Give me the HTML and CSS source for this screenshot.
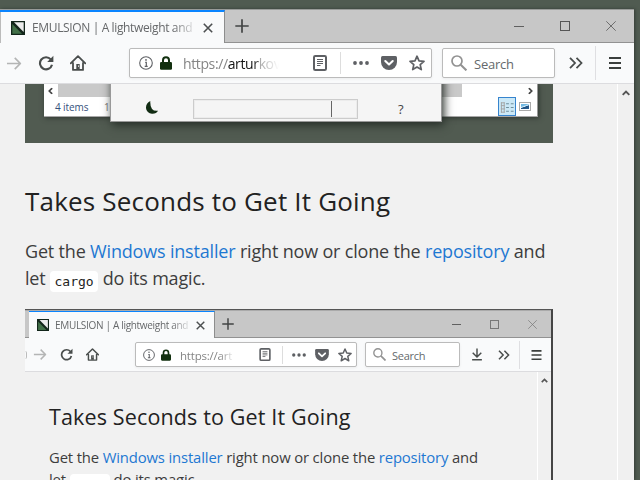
FILE: index.html
```
<!DOCTYPE html>
<html lang="en">
<head>
<meta charset="utf-8">
<title>EMULSION | A lightweight and minimalistic image viewer</title>
<link rel="stylesheet" href="styles.css">
</head>
<body>
<svg class="defs" width="0" height="0">
  <symbol id="logo" viewBox="0 0 14 14"><rect width="14" height="14" fill="#12251a"/><path d="M1.3 3 11 12.700H1.300z" fill="#427048"/><path d="M3 1.300H12.700V11z" fill="#ececec"/></symbol>
  <symbol id="cross" viewBox="0 0 10 10"><path d="M.8.8l8.400 8.400M9.200.8.8 9.200" fill="none" stroke="currentColor" stroke-width="1.600"/></symbol>
  <symbol id="thin-cross" viewBox="0 0 10 10"><path d="M.3.3l9.400 9.400M9.700.3.3 9.700" fill="none" stroke="currentColor" stroke-width=".8"/></symbol>
  <symbol id="plus" viewBox="0 0 14 14"><path d="M7 .3v13.400M.3 7h13.400" fill="none" stroke="currentColor" stroke-width="1.700"/></symbol>
  <symbol id="forward" viewBox="0 0 16 16"><path d="M.5 8h14M8.800 2l6 6-6 6" fill="none" stroke="currentColor" stroke-width="1.800" stroke-linejoin="round"/></symbol>
  <symbol id="reload" viewBox="0 0 16 16"><path d="M12.800 4.400A6.100 6.100 0 1 0 14 9.800" fill="none" stroke="currentColor" stroke-width="2.100"/><path d="M15.400.800V7H9.200z" fill="currentColor"/></symbol>
  <symbol id="home" viewBox="0 0 16 16"><path d="M.7 8.400 8 1.200l7.300 7.200M3 8v6.900h10V8" fill="none" stroke="currentColor" stroke-width="1.800" stroke-linejoin="round" stroke-linecap="round"/><path d="M6.300 9h3.400v5.500H6.300z" fill="currentColor"/><path d="M8 10.500h1v1.200H8z" fill="#fff"/></symbol>
  <symbol id="info" viewBox="0 0 14 14"><circle cx="7" cy="7" r="6.300" fill="none" stroke="currentColor" stroke-width="1.100"/><path d="M6.200 6.300H7.300v4M5.700 10.300h3" fill="none" stroke="currentColor" stroke-width="1.200"/><circle cx="7" cy="3.900" r=".9" fill="currentColor"/></symbol>
  <symbol id="lock" viewBox="0 0 12 14"><path d="M3 7V4.300a3 3 0 0 1 6 0V7" fill="none" stroke="currentColor" stroke-width="2"/><rect y="6" width="12" height="7.800" rx="1.300" fill="currentColor"/></symbol>
  <symbol id="reader" viewBox="0 0 14 16"><rect x="1" y="1" width="12" height="14" rx="1.300" fill="none" stroke="currentColor" stroke-width="2"/><path d="M4 4.500h6M4 6.500h6M4 8.500h6M4 10.500h3.500" stroke="currentColor"/></symbol>
  <symbol id="dots" viewBox="0 0 16 4"><circle cx="2" cy="2" r="1.900" fill="currentColor"/><circle cx="8" cy="2" r="1.900" fill="currentColor"/><circle cx="14" cy="2" r="1.900" fill="currentColor"/></symbol>
  <symbol id="pocket" viewBox="0 0 16 14"><path d="M1.500 0h13Q16 0 16 1.500V6A8 8 0 0 1 0 6V1.500Q0 0 1.500 0z" fill="currentColor"/><path d="M4.300 5 8 8.500 11.700 5" fill="none" stroke="#fff" stroke-width="2.100" stroke-linecap="round" stroke-linejoin="round"/></symbol>
  <symbol id="star" viewBox="0 0 16 16"><path d="M8 1.200 10 5.800l5 .5-3.800 3.300L12.300 14.600 8 12l-4.300 2.600 1.100-5L1 6.300l5-.5z" fill="none" stroke="currentColor" stroke-width="1.700" stroke-linejoin="round"/></symbol>
  <symbol id="magnifier" viewBox="0 0 16 16"><circle cx="6" cy="6" r="5" fill="none" stroke="currentColor" stroke-width="1.700"/><path d="M9.700 9.700 15.400 15.400" stroke="currentColor" stroke-width="2"/></symbol>
  <symbol id="download" viewBox="0 0 14 14"><path d="M7 0v9.500M2 5l5 5 5-5M1.300 13.100h11.400" fill="none" stroke="currentColor" stroke-width="1.700"/></symbol>
  <symbol id="more" viewBox="0 0 14 12"><path d="M1 .8 6 6l-5 5.200M7.500.8l5 5.200-5 5.200" fill="none" stroke="currentColor" stroke-width="1.800"/></symbol>
  <symbol id="menu" viewBox="0 0 12 12"><path d="M0 1h12M0 6h12M0 11h12" stroke="currentColor" stroke-width="1.900"/></symbol>
  <symbol id="up" viewBox="0 0 8 6"><path d="M.7 4.900 4 1.600l3.300 3.300" fill="none" stroke="currentColor" stroke-width="1.900"/></symbol>
  <symbol id="moon" viewBox="0 0 12 13"><path d="M4.300 0Q0 2 0 6.500A6 6 0 0 0 6.500 12.700Q10.500 12.600 12 9.800Q3.800 10.700 4.300 0z" fill="currentColor"/></symbol>
</svg>

<main class="browser">
  <header class="titlebar">
    <div class="tab">
      <svg class="favicon"><use href="#logo"/></svg>
      <span class="tab-title">EMULSION | A lightweight and</span>
      <svg class="tab-close"><use href="#cross"/></svg>
    </div>
    <svg class="new-tab"><use href="#plus"/></svg>
    <div class="controls"><i class="minimize"></i><i class="maximize"></i><svg class="close"><use href="#thin-cross"/></svg></div>
  </header>
  <nav class="toolbar">
    <svg class="forward"><use href="#forward"/></svg>
    <svg class="reload"><use href="#reload"/></svg>
    <svg class="home"><use href="#home"/></svg>
    <div class="urlbar">
      <svg class="info"><use href="#info"/></svg>
      <svg class="lock"><use href="#lock"/></svg>
      <span class="url">https://<b>artur</b>kov</span>
      <svg class="reader"><use href="#reader"/></svg>
      <i class="divider"></i>
      <svg class="dots"><use href="#dots"/></svg>
      <svg class="pocket"><use href="#pocket"/></svg>
      <svg class="star"><use href="#star"/></svg>
    </div>
    <div class="search"><svg class="magnifier"><use href="#magnifier"/></svg><span>Search</span></div>
    <svg class="more"><use href="#more"/></svg>
    <i class="separator"></i>
    <svg class="menu"><use href="#menu"/></svg>
  </nav>
  <div class="viewport">
    <article class="page">
      <figure class="desktop">
        <div class="explorer">
          <div class="hscroll"><svg class="left"><use href="#up"/></svg><span class="thumb"></span><svg class="right"><use href="#up"/></svg></div>
          <div class="status"><span class="items">4 items</span><span class="selected">1</span>
            <span class="view details"><svg width="16" height="13" viewBox="0 0 16 13"><path d="M1.500 1v11M4.500 1v11M1 1.500h4M1 4.500h4M1 8h4M1 11.500h4" stroke="#a2a2a2" fill="none"/><path d="M6.500 2.500h3M11.500 2.500h3M6.500 6.500h3M11.500 6.500h3M6.500 10.500h3M11.500 10.500h3" stroke="#698996"/></svg></span>
            <span class="view picture"></span>
          </div>
        </div>
        <div class="dialog">
          <svg class="moon"><use href="#moon"/></svg>
          <div class="slider"></div>
          <span class="help">?</span>
        </div>
      </figure>
      <h1>Takes Seconds to Get It Going</h1>
      <p>Get the <a>Windows installer</a> right now or clone the <a>repository</a> and<br>let <code>cargo</code> do its magic.</p>
      <section class="browser inner">
        <header class="titlebar">
          <div class="tab">
            <svg class="favicon"><use href="#logo"/></svg>
            <span class="tab-title">EMULSION | A lightweight and</span>
            <svg class="tab-close"><use href="#cross"/></svg>
          </div>
          <svg class="new-tab"><use href="#plus"/></svg>
          <div class="controls"><i class="minimize"></i><i class="maximize"></i><svg class="close"><use href="#thin-cross"/></svg></div>
        </header>
        <nav class="toolbar">
          <i class="back"></i>
          <svg class="forward"><use href="#forward"/></svg>
          <svg class="reload"><use href="#reload"/></svg>
          <svg class="home"><use href="#home"/></svg>
          <div class="urlbar">
            <svg class="info"><use href="#info"/></svg>
            <svg class="lock"><use href="#lock"/></svg>
            <span class="url">https://art</span>
            <svg class="reader"><use href="#reader"/></svg>
            <i class="divider"></i>
            <svg class="dots"><use href="#dots"/></svg>
            <svg class="pocket"><use href="#pocket"/></svg>
            <svg class="star"><use href="#star"/></svg>
          </div>
          <div class="search"><svg class="magnifier"><use href="#magnifier"/></svg><span>Search</span></div>
          <svg class="download"><use href="#download"/></svg>
          <svg class="more"><use href="#more"/></svg>
          <i class="separator"></i>
          <svg class="menu"><use href="#menu"/></svg>
        </nav>
        <div class="viewport">
          <article class="page">
            <h1>Takes Seconds to Get It Going</h1>
            <p>Get the <a>Windows installer</a> right now or clone the <a>repository</a> and<br>let <code>cargo</code> do its magic.</p>
          </article>
          <aside class="scrollbar"><svg><use href="#up"/></svg></aside>
        </div>
      </section>
    </article>
    <aside class="scrollbar"><svg><use href="#up"/></svg></aside>
  </div>
</main>
</body>
</html>
```
FILE: styles.css
```
* { box-sizing: border-box; }
body { margin: 0; width: 640px; height: 480px; overflow: hidden; padding-top: 9px; background: #505b51; font-family: "Open Sans", "Noto Sans", sans-serif; }
svg { display: block; flex: none; }
.defs { position: absolute; }
i, b { font-style: normal; font-weight: 400; }
h1, p, figure { margin: 0; font-weight: 400; white-space: nowrap; }

.browser { width: 634px; height: 471px; background: #f1f1f1; box-shadow: 1px 0 3px #343c35; overflow: hidden; display: flex; flex-direction: column; }
main.browser { overflow: visible; }
.titlebar { height: 34px; flex: none; display: flex; align-items: center; background: #c7c7c7; border-top: 1px solid #999b99; border-bottom: 1px solid #929292; color: #555; }
.tab { width: 225px; height: 34px; align-self: flex-start; margin-left: 0; flex: none; display: flex; align-items: center; background: #f9fafb; border-top: 2px solid #0a84ff; border-right: 1px solid #8d8d8d; box-shadow: inset 1px 0 #bbb; }
.favicon { width: 14px; height: 14px; margin-left: 11px; }
.tab-title { width: 162px; margin-left: 7px; flex: none; overflow: hidden; white-space: nowrap; font-size: 12px; line-height: 18px; letter-spacing: -.36px; color: #66686a; -webkit-mask-image: linear-gradient(90deg, #000 87%, rgba(0,0,0,.15)); mask-image: linear-gradient(90deg, #000 87%, rgba(0,0,0,.15)); }
.tab-close { width: 10px; height: 10px; margin-left: 9px; color: #4c4f50; }
.new-tab { width: 14px; height: 14px; margin-left: 10px; color: #424444; }
.controls { margin-left: auto; margin-right: 18px; display: flex; align-items: center; gap: 36px; }
.minimize { width: 10px; height: 1px; background: #606060; }
.maximize { width: 10px; height: 10px; border: 1px solid #555; }
.close { width: 10px; height: 10px; }

.toolbar { height: 41px; flex: none; display: flex; align-items: center; background: #f9fafb; border-bottom: 1px solid #dcdcdf; color: #494d4c; }
.forward { width: 16px; height: 15px; margin-left: 6px; color: #b4b5b5; }
.reload { width: 16px; height: 16px; margin-left: 16px; }
.home { width: 16px; height: 16px; margin-left: 16px; }
.urlbar, .search { height: 30px; flex: none; display: flex; align-items: center; background: #fff; border: 1px solid #bbb; border-radius: 2px; box-shadow: 0 1px 3px rgba(0,0,0,.06); }
.urlbar { width: 303px; margin-left: 43px; color: #5e6064; }
.info { width: 14px; height: 14px; margin-left: 9px; }
.lock { width: 12px; height: 14px; margin-left: 7px; color: #12300f; }
.url { width: 96px; height: 20px; margin-left: 11px; flex: none; white-space: nowrap; font-size: 14px; line-height: 22px; letter-spacing: -.38px; color: #858585; -webkit-mask-image: linear-gradient(90deg, #000 72%, transparent); mask-image: linear-gradient(90deg, #000 72%, transparent); }
.url b { color: #151515; }
.reader { width: 14px; height: 16px; margin-left: 34px; }
.divider { width: 1px; height: 22px; margin-left: 13px; background: #ddd; }
.dots { width: 16px; height: 4px; margin-left: 12px; }
.pocket { width: 16px; height: 14px; margin-left: 12px; }
.star { width: 16px; height: 16px; margin-left: 12px; }
.search { width: 113px; margin-left: 10px; font-size: 13px; line-height: 20px; letter-spacing: -.25px; color: #65696c; }
.search span { padding-top: 2px; }
.magnifier { width: 16px; height: 16px; margin: 0 7px 0 8px; color: #929292; }
.more { width: 14px; height: 12px; margin-left: 14px; }
.separator { width: 1px; height: 34px; margin-left: 12px; background: #dfdfe2; }
.menu { width: 12px; height: 12px; margin-left: 13px; color: #3b3f3d; }

.viewport { flex: 1; min-height: 0; display: flex; overflow: hidden; }
.page { flex: 1; padding-left: 25px; }
.scrollbar { width: 17px; flex: none; padding: 6px 0 0 4px; border-left: 1px solid #fff; background: #f0f0f0; color: #555; }
.scrollbar svg { width: 8px; height: 6px; }

.desktop { width: 528px; height: 59px; background: #515b51; position: relative; overflow: hidden; }
.explorer { width: 494px; height: 33px; margin-left: 19px; background: #fff; border-right: 1px solid #999; border-bottom: 1px solid #a8a8a8; box-shadow: 1px 1px 5px #303731; }
.hscroll { height: 13px; display: flex; align-items: center; justify-content: space-between; color: #444; }
.hscroll svg { width: 7px; height: 6px; }
.left { transform: rotate(-90deg); margin-left: 3px; }
.right { transform: rotate(90deg); margin-right: 3px; }
.thumb { width: 404px; height: 13px; margin-right: auto; margin-left: 4px; background: #c9c9c9; }
.status { height: 19px; display: flex; align-items: center; font-size: 10px; color: #35507c; letter-spacing: -.1px; }
.items { margin-left: 11px; width: 49px; }
.selected { width: 10px; color: #777; }
.view { flex: none; }
.details { width: 18px; height: 19px; margin-left: auto; padding: 3px 0 0 1px; background: #cbe8f6; border: 1px solid #3684ce; }
.details svg { width: 15px; height: 13px; }
.picture { width: 12px; height: 9px; margin: 0 6px 0 3px; border: 1px solid #aaa; box-shadow: inset 0 0 0 1px #fff; background: linear-gradient(160deg, #70b9e4 35%, #d9eff8 48%, #1d5081 55%, #326a9d); }
.dialog { position: absolute; left: 85px; top: -20px; width: 332px; height: 58px; padding-top: 20px; display: flex; align-items: center; background: #f5f5f5; border: 1px solid #999; border-top: 0; box-shadow: 2px 3px 9px #252d27; }
.moon { width: 12px; height: 13px; margin: 10px 0 0 35px; color: #122c13; }
.slider { width: 165px; height: 20px; margin: 13px 0 0 35px; border: 1px solid #ccc; box-shadow: inset 0 0 0 1px #ececec; background: linear-gradient(90deg, transparent 137px, #666 137px, #666 138px, transparent 138px); }
.help { margin: 12px 0 0 40px; font-size: 13px; color: #444; }

h1 { font-size: 26px; line-height: 36px; margin-top: 40px; letter-spacing: .19px; color: #222; }
p { font-size: 18px; line-height: 27px; margin-top: 19px; letter-spacing: -.18px; color: #3d3d3d; }
a { color: #1e78d2; }
code { display: inline-block; height: 21px; line-height: 21px; padding: 0 4.500px; margin: 0; border-radius: 4px; background: #fff; color: #222; font-family: "DejaVu Sans Mono", monospace; font-size: 13px; letter-spacing: 0; vertical-align: -1px; }

.inner { width: 528px; height: 190px; margin-top: 17px; border-top: 1px solid #555; border-right: 2px solid #454545; box-shadow: none; }
.inner .titlebar { height: 28px; border-top-color: #aaa; }
.inner .tab { width: 186px; height: 27px; margin-left: 4px; box-shadow: none; border-top-width: 1px; }
.inner .favicon { width: 12px; height: 12px; margin-left: 8px; }
.inner .tab-title { width: 134px; margin-left: 6px; font-size: 10px; letter-spacing: -.31px; }
.inner .tab-close { width: 9px; height: 9px; margin-left: 7px; }
.inner .new-tab { width: 12px; height: 12px; margin-left: 7px; }
.inner .controls { margin-right: 14px; gap: 29px; color: #777; }
.inner .minimize, .inner .close { width: 9px; }
.inner .maximize { width: 9px; height: 9px; border-color: #777; }
.inner .close { height: 9px; }
.inner .toolbar { height: 34px; }
.back { width: 2px; height: 8px; border-right: 1px solid #bbb; border-radius: 0 4px 4px 0; }
.inner .forward { width: 14px; height: 13px; margin-left: 6px; }
.inner .reload { width: 13px; height: 13px; margin-left: 13px; }
.inner .home { width: 13px; height: 13px; margin-left: 13px; }
.inner .urlbar, .inner .search { height: 25px; }
.inner .urlbar { width: 222px; margin-left: 36px; }
.inner .info { width: 12px; height: 12px; margin-left: 7px; }
.inner .lock { width: 10px; height: 12px; margin-left: 6px; }
.inner .url { width: 55px; margin-left: 9px; font-size: 11.500px; letter-spacing: -.2px; }
.inner .reader { width: 12px; height: 13px; margin-left: 24px; }
.inner .divider { height: 18px; margin-left: 11px; }
.inner .dots { width: 14px; height: 4px; margin-left: 9px; }
.inner .pocket { width: 14px; height: 12px; margin-left: 9px; }
.inner .star { width: 14px; height: 14px; margin-left: 9px; }
.inner .search { width: 95px; margin-left: 8px; font-size: 11px; }
.inner .magnifier { width: 13px; height: 13px; margin: 0 6px 0 7px; }
.download { width: 12px; height: 13px; margin-left: 11px; }
.inner .more { width: 12px; height: 10px; margin-left: 15px; }
.inner .separator { height: 28px; margin-left: 9px; }
.inner .menu { width: 11px; height: 10px; margin-left: 11px; }
.inner .page { padding-left: 24px; }
.inner .scrollbar { width: 14px; padding-left: 3px; }
.inner .scrollbar svg { width: 7px; height: 5px; }
.inner h1 { font-size: 21.500px; line-height: 30px; margin-top: 30px; letter-spacing: .14px; }
.inner p { font-size: 14.850px; line-height: 22px; margin-top: 14px; letter-spacing: -.15px; }
.inner code { font-size: 10.700px; height: 17px; line-height: 17px; padding: 0 4px; }
```
